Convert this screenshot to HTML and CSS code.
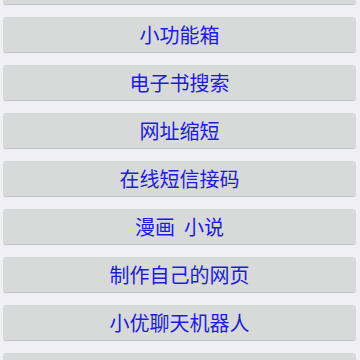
FILE: index.html
```html
<!DOCTYPE html>
<html lang="zh">
<head>
    <meta charset="UTF-8">
    <meta name="viewport" content="width=device-width, initial-scale=1.0">
    <title>工具</title>
    <link rel="stylesheet" href="styles.css">
</head>
<body>
    <div class="menu-list">
        <a class="menu-btn" href="#">&nbsp;</a>
        <a class="menu-btn" href="#">小功能箱</a>
        <a class="menu-btn" href="#">电子书搜索</a>
        <a class="menu-btn" href="#">网址缩短</a>
        <a class="menu-btn" href="#">在线短信接码</a>
        <a class="menu-btn" href="#">漫画&nbsp;&nbsp;小说</a>
        <a class="menu-btn" href="#">制作自己的网页</a>
        <a class="menu-btn" href="#">小优聊天机器人</a>
        <a class="menu-btn" href="#">&nbsp;</a>
    </div>
</body>
</html>
```

FILE: styles.css
```css
html, body {
    margin: 0;
    padding: 0;
    background-color: #efeff4;
    font-family: "Noto Sans CJK SC", "Noto Sans", sans-serif;
    overflow: hidden;
    height: 360px;
}

.menu-list {
    display: flex;
    flex-direction: column;
    gap: 12px;
    margin-top: -31px;
    padding: 0 4px 0 3px;
}

.menu-btn {
    display: block;
    height: 35px;
    line-height: 36px;
    text-align: center;
    text-decoration: none;
    font-size: 20px;
    color: #1c1ce0;
    background-color: #d8d9d9;
    border-radius: 3px;
    border-bottom: 1px solid #c4c4c8;
}
```
